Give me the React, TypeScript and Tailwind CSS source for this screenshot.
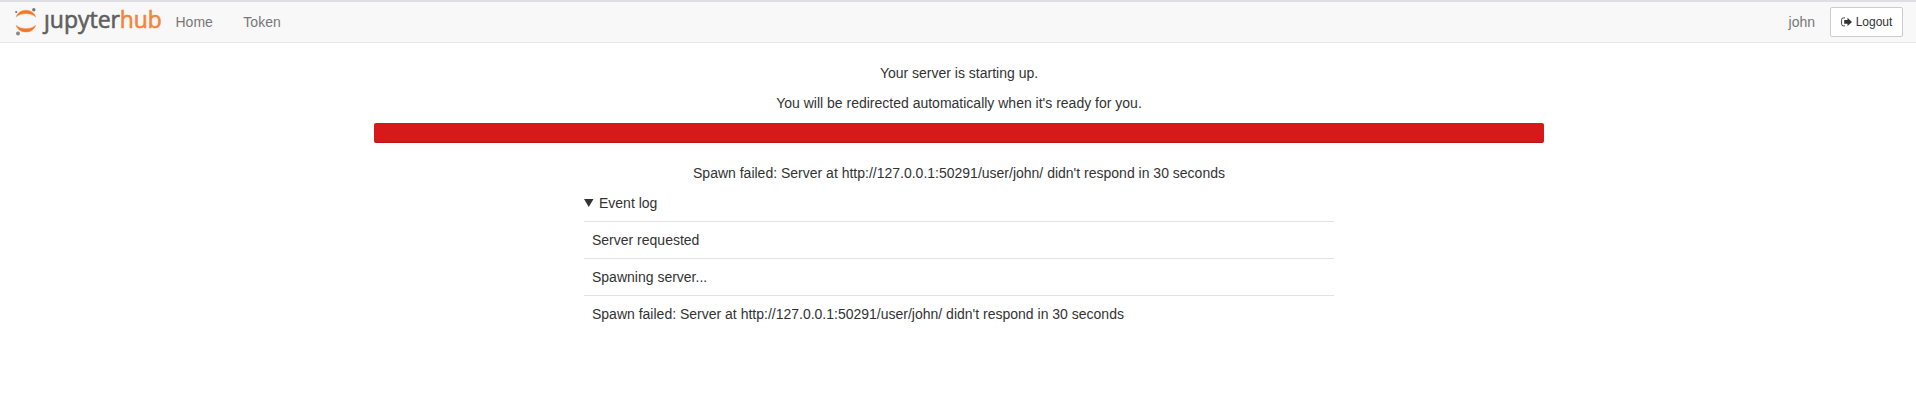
const events = [
  "Server requested",
  "Spawning server...",
  "Spawn failed: Server at http://127.0.0.1:50291/user/john/ didn't respond in 30 seconds",
];

function Logo() {
  return (
    <svg width="150" height="38" viewBox="12 2 150 38" className="block" aria-label="jupyterhub">
      <path d="M16 16.8A10.7 10.7 0 0 1 35.8 16.8A16.5 16.5 0 0 0 16 16.8Z" fill="#f37726" stroke="#f37726" strokeWidth=".4" />
      <path d="M16 25.4A10.7 10.7 0 0 0 35.8 25.4A16.5 16.5 0 0 1 16 25.4Z" fill="#f37726" stroke="#f37726" strokeWidth=".4" />
      <circle cx="33.8" cy="9.7" r="1.7" fill="#767677" />
      <circle cx="18" cy="33.6" r="2" fill="#8a8a8a" />
      <circle cx="16.2" cy="12" r="1.1" fill="#767677" />
      <text x="44" y="27.8" fontSize="22.8" fontFamily="'Open Sans', sans-serif" fill="#5f5f5f" stroke="#5f5f5f" strokeWidth=".6" textLength="76" lengthAdjust="spacingAndGlyphs">ȷupyter</text>
      <text x="119.7" y="27.8" fontSize="22.8" fontFamily="'Open Sans', sans-serif" fill="#f5833c" stroke="#f5833c" strokeWidth=".6" textLength="42" lengthAdjust="spacingAndGlyphs">hub</text>
    </svg>
  );
}

export default function App() {
  return (
    <div className="min-h-[402px] bg-white font-['Liberation_Sans',Arial,sans-serif] text-sm leading-5 text-[#333]">
      <nav className="flex h-[43px] items-start justify-between border-t-2 border-b border-t-[#dfdfe3] border-b-[#e7e7e7] bg-[#f8f8f8] pr-[13px] pl-3 text-[#777]">
        <div className="flex">
          <Logo />
          <a className="ml-[13.5px] pt-[10px]">Home</a>
          <a className="ml-[30.5px] pt-[10px]">Token</a>
        </div>
        <div className="flex">
          <span className="mt-[10px] mr-[15px]">john</span>
          <button className="mt-[5px] flex h-[30px] w-[73px] items-center justify-center rounded-[2px] border border-[#ccc] bg-white text-xs leading-[18px] text-[#333]">
            <svg width="11" height="10" viewBox="0 0 11 10" className="mr-1" fill="#333">
              <path d="M4 .9H2.3Q.6.9.6 2.6V7.2Q.6 8.9 2.3 8.9H4" fill="none" stroke="#333" strokeWidth=".9" />
              <path d="M6.5.8 11 4.9 6.5 9V6.8H3.2V3H6.5Z" />
            </svg>
            Logout
          </button>
        </div>
      </nav>
      <main className="ml-[374px] w-[1170px] pt-5 text-center">
        <p className="mb-[10px]">Your server is starting up.</p>
        <p className="mb-[10px]">You will be redirected automatically when it's ready for you.</p>
        <div className="mb-5 h-5 rounded-[2px] bg-[#d8191a] shadow-[inset_0_-1px_0_rgba(0,0,0,0.15)]" />
        <p className="mb-[10px]">Spawn failed: Server at http://127.0.0.1:50291/user/john/ didn't respond in 30 seconds</p>
        <section className="mx-auto w-[750px] text-left">
          <div className="mb-2 flex items-center">
            <svg width="10" height="8" viewBox="0 0 10 8" className="mr-[5px]">
              <path d="M0 0H9.5L4.75 8Z" fill="#333" />
            </svg>
            Event log
          </div>
          {events.map((event) => (
            <div key={event} className="border-t border-[#e3e3e3] p-2">{event}</div>
          ))}
        </section>
      </main>
    </div>
  );
}
